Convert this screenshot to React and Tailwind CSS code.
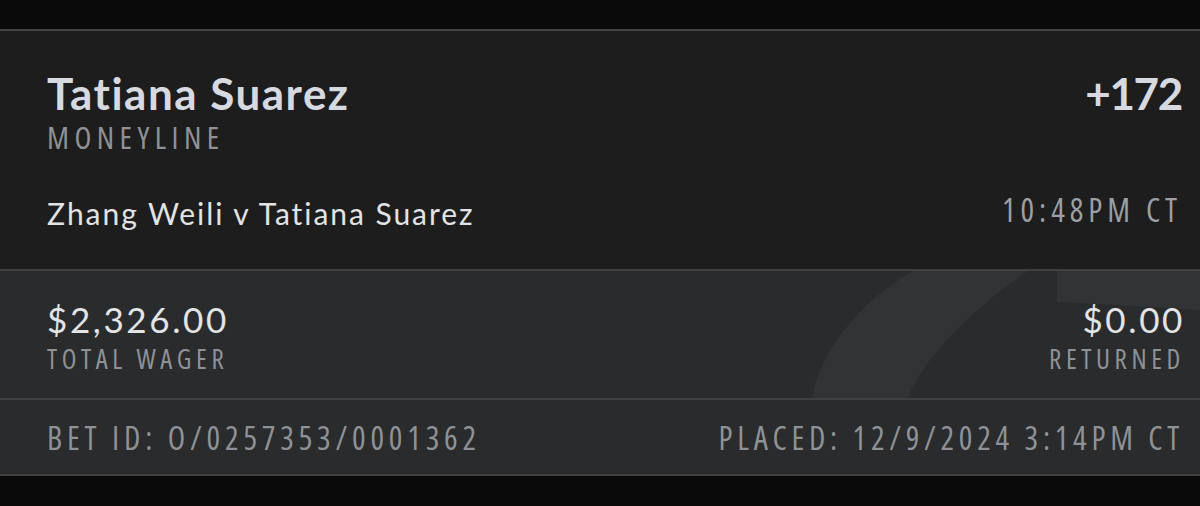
import React from 'react';

const sans = "font-['Lato','Noto_Sans',sans-serif] [font-variant-ligatures:none]";
const cond = "font-['Open_Sans','Noto_Sans',sans-serif] [font-stretch:75%]";

function Watermark() {
  return (
    <svg className="absolute inset-0 h-full w-full pointer-events-none" viewBox="0 0 1200 127" preserveAspectRatio="none">
      <path d="M812 127 C 820 80, 860 30, 913 0 L 1028 0 C 970 40, 925 85, 908 127 Z" fill="#ffffff" fillOpacity="0.04" />
      <path d="M1057 0 L 1200 0 L 1200 39 C 1150 36, 1100 33, 1057 31 Z" fill="#ffffff" fillOpacity="0.04" />
    </svg>
  );
}

function Amount({ value, label, align }) {
  return (
    <div className={align === 'right' ? 'flex flex-col items-end' : 'flex flex-col items-start'}>
      <div className={`${sans} text-[35px] leading-none tracking-[0.075em] text-[#e2e4e6] ${align === 'right' ? 'mr-[-3px]' : ''}`}>{value}</div>
      <div className={`${cond} mt-[8px] text-[27px] leading-none tracking-[0.17em] text-[#8e9296] ${align === 'right' ? 'mr-[-3px]' : ''}`}>{label}</div>
    </div>
  );
}

export default function App() {
  return (
    <div className="w-[1200px] h-[506px] bg-[#0a0a0a] overflow-hidden">
      <div className="h-[29px]" />
      <div className="border-t-2 border-[#434343] bg-[#1d1d1d] pl-[47px] pr-[18px] pt-[40px] h-[240px]">
        <div className="flex items-start justify-between">
          <div className={`${sans} text-[44px] leading-none font-bold tracking-[0.034em] text-[#d6dae0]`}>Tatiana Suarez</div>
          <div className={`${sans} text-[44px] leading-none font-bold tracking-[-0.03em] text-[#d6dae0]`}>+172</div>
        </div>
        <div className={`${cond} mt-[7px] text-[31px] leading-none tracking-[0.175em] text-[#8e9296]`}>MONEYLINE</div>
        <div className="mt-[45px] flex items-start justify-between">
          <div className={`${sans} text-[30px] leading-none tracking-[0.065em] text-[#e1e3e5]`}>Zhang Weili v Tatiana Suarez</div>
          <div className={`${cond} mt-[-4px] text-[32px] leading-none tracking-[0.155em] text-[#9c9fa3]`}>10:48PM CT</div>
        </div>
      </div>
      <div className="relative border-t-2 border-[#3f4042] bg-[#2a2b2d] h-[129px]">
        <Watermark />
        <div className="relative flex justify-between pl-[47px] pr-[18px] pt-[31px]">
          <Amount value="$2,326.00" label="TOTAL WAGER" align="left" />
          <Amount value="$0.00" label="RETURNED" align="right" />
        </div>
      </div>
      <div className="border-t-2 border-b-2 border-[#3f4042] bg-[#2a2b2d] h-[78px] flex items-start justify-between pl-[47px] pr-[18px] pt-[22px]">
        <div className={`${cond} text-[32px] leading-none tracking-[0.15em] text-[#8e9296]`}>BET ID: O/0257353/0001362</div>
        <div className={`${cond} mr-[-2px] text-[32px] leading-none tracking-[0.148em] text-[#8e9296]`}>PLACED: 12/9/2024 3:14PM CT</div>
      </div>
    </div>
  );
}
